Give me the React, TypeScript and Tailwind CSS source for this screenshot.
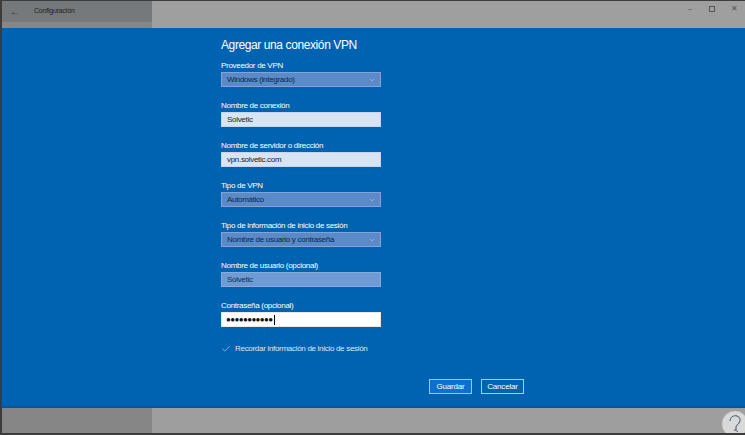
import { Check, ChevronDown } from "lucide-react";

const fields = [
  { label: "Proveedor de VPN", value: "Windows (integrado)", kind: "select" },
  { label: "Nombre de conexión", value: "Solvetic", kind: "light" },
  { label: "Nombre de servidor o dirección", value: "vpn.solvetic.com", kind: "light" },
  { label: "Tipo de VPN", value: "Automático", kind: "select" },
  { label: "Tipo de información de inicio de sesión", value: "Nombre de usuario y contraseña", kind: "select" },
  { label: "Nombre de usuario (opcional)", value: "Solvetic", kind: "muted" },
  { label: "Contraseña (opcional)", value: "", kind: "password" },
];

function Field({ label, value, kind }: { label: string; value: string; kind: string }) {
  return (
    <div className="flex flex-col mb-[12px]">
      <div className="h-[13px] text-[8px] tracking-[-0.3px] leading-[13px] text-white">{label}</div>
      {kind === "select" && (
        <div className="h-[15px] w-[160px] flex items-center justify-between pl-[5px] pr-[4px] bg-[#5a8ac8] border border-[#7fa5d8] text-[8px] tracking-[-0.3px] text-[#14253d]">
          <span>{value}</span>
          <ChevronDown className="w-[8px] h-[8px] text-[#c3d5ee]" strokeWidth={1.5} />
        </div>
      )}
      {kind === "light" && (
        <div className="h-[15px] w-[160px] flex items-center pl-[5px] bg-[#d6e4f4] border border-[#c4d7ee] text-[8px] tracking-[-0.3px] text-[#1c1c1c]">
          {value}
        </div>
      )}
      {kind === "muted" && (
        <div className="h-[15px] w-[160px] flex items-center pl-[5px] bg-[#6f9bd5] border border-[#86acdd] text-[8px] tracking-[-0.3px] text-[#1c2a3f]">
          {value}
        </div>
      )}
      {kind === "password" && (
        <div className="h-[15px] w-[160px] flex items-center pl-[4px] bg-white border border-[#e8e8e8] text-[#111]">
          <span className="text-[8px] leading-none tracking-[-0.6px]">●●●●●●●●●●●</span>
          <span className="ml-[1px] w-px h-[10px] bg-black" />
        </div>
      )}
    </div>
  );
}

export default function App() {
  return (
    <div className="w-[745px] h-[435px] flex flex-col border-l-2 border-t border-b-2 border-[#3c3c3c] font-['Liberation_Sans',Arial,sans-serif] overflow-hidden">
      {/* title bar */}
      <div className="flex h-[27px]">
        <div className="w-[150px] flex flex-col">
          <div className="h-[21px] bg-[#75797b] flex items-center">
            <span className="ml-[8px] text-[#2e2e2e] text-[10px] leading-none">←</span>
            <span className="ml-[14px] text-[7px] tracking-[-0.2px] text-[#1e1e1e]">Configuración</span>
          </div>
          <div className="flex-1 bg-[#8a8683]" />
        </div>
        <div className="flex-1 bg-[#9f9f9f] flex items-start justify-end">
          <div className="flex items-center h-[16px] text-[#555] text-[8px]">
            <span className="w-[22px] text-center">–</span>
            <span className="w-[22px] flex justify-center">
              <span className="w-[6px] h-[6px] border border-[#555]" />
            </span>
            <span className="w-[22px] text-center">✕</span>
          </div>
        </div>
      </div>

      {/* dialog */}
      <div className="h-[380px] bg-[#0063b1] border-b-2 border-[#0a579b] flex flex-col pl-[219px]">
        <div className="pt-[8px] mb-[5px] text-[12px] tracking-[-0.4px] leading-[18px] text-white">
          Agregar una conexión VPN
        </div>
        {fields.map((f) => (
          <Field key={f.label} label={f.label} value={f.value} kind={f.kind} />
        ))}
        <div className="mt-[3px] flex items-center h-[13px] text-[8px] tracking-[-0.3px] text-[#dbe7f5]">
          <Check className="w-[10px] h-[10px] text-[#cfe0f5]" strokeWidth={1.5} />
          <span className="ml-[4px]">Recordar información de inicio de sesión</span>
        </div>
        <div className="mt-[24px] ml-[208px] flex gap-[9px]">
          <button className="w-[43px] h-[15px] bg-[#0f6fce] border border-[#9cc7f2] text-[8px] tracking-[-0.2px] text-white leading-none">
            Guardar
          </button>
          <button className="w-[43px] h-[15px] border border-[#a7cbee] text-[8px] tracking-[-0.2px] text-white leading-none">
            Cancelar
          </button>
        </div>
      </div>

      {/* bottom strip */}
      <div className="flex flex-1">
        <div className="w-[150px] bg-[#868686]" />
        <div className="flex-1 bg-[#9e9e9e] flex justify-end items-end">
          <svg width="28" height="26" viewBox="0 0 28 26" className="mr-[-4px] mb-[-2px]">
            <circle cx="14" cy="15" r="13" fill="#d9d9d9" stroke="#bdbdbd" strokeWidth="1" />
            <path d="M9 12c0-4 4-6 7-5s4 4 2 7c-1 2-3 2-3 4v3" fill="none" stroke="#3f4b66" strokeWidth="1" />
            <path d="M13 21c2 0 3 1 4 2" fill="none" stroke="#3f4b66" strokeWidth="1" />
          </svg>
        </div>
      </div>
    </div>
  );
}
